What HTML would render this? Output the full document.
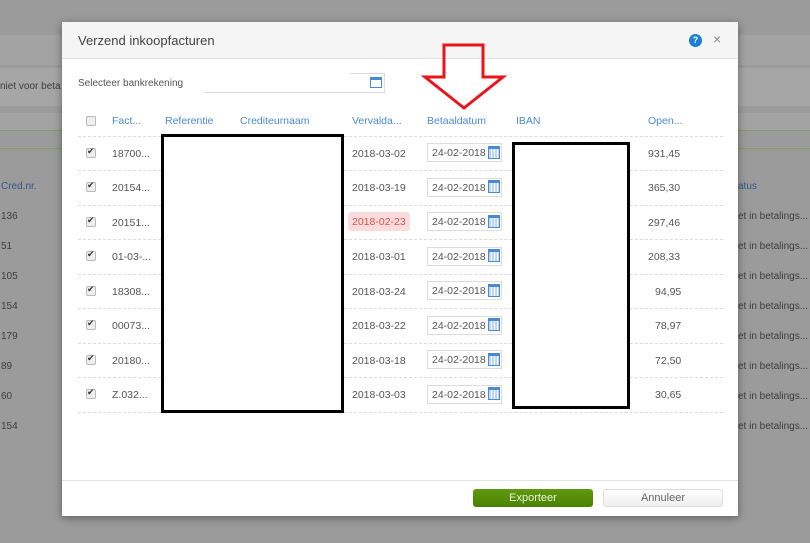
<!DOCTYPE html>
<html><head><meta charset="utf-8"><style>
*{box-sizing:border-box;margin:0;padding:0}
body{width:810px;height:543px;position:relative;overflow:hidden;background:#9b9b9b;font-family:"Liberation Sans",sans-serif;font-size:10.5px;color:#555}
.a{position:absolute;white-space:nowrap}
.bg{color:#3e3e3e;font-size:10px}
.modal{left:62px;top:22px;width:676px;height:494px;background:#fff;box-shadow:0 2px 8px rgba(0,0,0,.4)}
.hd{left:0;top:0;width:676px;height:37px;background:#f5f5f5;border-bottom:1px solid #e3e3e3}
.th{color:#4a8ad0;font-size:10.5px;top:93px}
.row{left:16px;width:645px;height:1px;border-top:1px dashed #dcdcdc}
.cb{width:10px;height:10px;border:1px solid #bbb;background:#eee;border-radius:2px}
.cb.c::after{content:"✔";position:absolute;left:0;top:-3px;font-size:9px;color:#333}
.inp{width:75px;height:19px;border:1px solid #ddd;font-size:10.5px;color:#555;padding:3px 0 0 4px}
.cal{width:12px;height:13px;border:1px solid #4a8ad0;background:repeating-linear-gradient(90deg,#bcd6f2 0 2px,#fff 2px 3px);border-top:3px solid #4a8ad0}
</style></head><body>
<div class="a" style="left:0;top:35px;width:810px;height:30px;background:#a3a3a3"></div>
<div class="a" style="left:0;top:68px;width:810px;height:38px;background:#a6a6a6"></div>
<div class="a bg" style="left:0;top:81px">niet voor beta</div>
<div class="a" style="left:0;top:113px;width:810px;height:18px;background:#a3a3a3"></div>
<div class="a" style="left:0;top:130px;width:810px;height:1px;background:#8a9a6a"></div>
<div class="a" style="left:0;top:148px;width:810px;height:1px;background:#8a9a6a"></div>
<div class="a bg" style="left:1px;top:181px;color:#35558a">Cred.nr.</div>
<div class="a bg" style="left:738px;top:181px;color:#35558a">atus</div>
<div class="a bg" style="left:1px;top:211px">136</div><div class="a bg" style="left:1px;top:241px">51</div><div class="a bg" style="left:1px;top:271px">105</div><div class="a bg" style="left:1px;top:301px">154</div><div class="a bg" style="left:1px;top:331px">179</div><div class="a bg" style="left:1px;top:361px">89</div><div class="a bg" style="left:1px;top:391px">60</div><div class="a bg" style="left:1px;top:421px">154</div>
<div class="a bg" style="left:738px;top:211px">et in betalings...</div><div class="a bg" style="left:738px;top:241px">et in betalings...</div><div class="a bg" style="left:738px;top:271px">et in betalings...</div><div class="a bg" style="left:738px;top:301px">et in betalings...</div><div class="a bg" style="left:738px;top:331px">et in betalings...</div><div class="a bg" style="left:738px;top:361px">et in betalings...</div><div class="a bg" style="left:738px;top:391px">et in betalings...</div><div class="a bg" style="left:738px;top:421px">et in betalings...</div>

<div class="a modal">
<div class="a hd"></div>
<div class="a" style="left:16px;top:11px;font-size:13px;color:#444">Verzend inkoopfacturen</div>
<div class="a" style="left:627px;top:12px;width:13px;height:13px;border-radius:50%;background:#1a7fd6;color:#fff;font-size:9px;font-weight:bold;text-align:center;line-height:13px">?</div>
<div class="a" style="left:651px;top:9px;font-size:14px;color:#888">×</div>
<div class="a" style="left:16px;top:56px;font-size:10px;color:#555">Selecteer bankrekening</div>
<div class="a" style="left:142px;top:51px;width:181px;height:20px;border-bottom:1px solid #ddd;border-right:1px solid #ddd"></div>
<div class="a" style="left:288px;top:51px;width:35px;height:20px;border-top:1px solid #ddd"></div>
<div class="a" style="left:308px;top:55px;width:12px;height:11px;border:1px solid #4a8ad0;border-top:3px solid #4a8ad0"></div>

<div class="a cb" style="left:24px;top:94px"></div>
<div class="a th" style="left:50px">Fact...</div>
<div class="a th" style="left:103px">Referentie</div>
<div class="a th" style="left:178px">Crediteurnaam</div>
<div class="a th" style="left:290px">Vervalda...</div>
<div class="a th" style="left:365px">Betaaldatum</div>
<div class="a th" style="left:454px">IBAN</div>
<div class="a th" style="left:586px">Open...</div>

<div class="a row" style="top:114px"></div>
<div class="a row" style="top:148px"></div>
<div class="a row" style="top:183px"></div>
<div class="a row" style="top:217px"></div>
<div class="a row" style="top:252px"></div>
<div class="a row" style="top:286px"></div>
<div class="a row" style="top:321px"></div>
<div class="a row" style="top:355px"></div>
<div class="a row" style="top:390px"></div>

<div class="a cb c" style="left:24px;top:126px"></div><div class="a" style="left:50px;top:126px">18700...</div><div class="a" style="left:290px;top:126px">2018-03-02</div><div class="a inp" style="left:365px;top:121px">24-02-2018</div><div class="a cal" style="left:426px;top:124px"></div><div class="a" style="left:586px;top:126px">931,45</div>
<div class="a cb c" style="left:24px;top:160px"></div><div class="a" style="left:50px;top:160px">20154...</div><div class="a" style="left:290px;top:160px">2018-03-19</div><div class="a inp" style="left:365px;top:156px">24-02-2018</div><div class="a cal" style="left:426px;top:158px"></div><div class="a" style="left:586px;top:160px">365,30</div>
<div class="a cb c" style="left:24px;top:195px"></div><div class="a" style="left:50px;top:195px">20151...</div><div class="a" style="left:286px;top:190px;width:62px;height:19px;background:#fadcdc;border-radius:3px;color:#d9534f;padding:4px 0 0 4px">2018-02-23</div><div class="a inp" style="left:365px;top:190px">24-02-2018</div><div class="a cal" style="left:426px;top:193px"></div><div class="a" style="left:586px;top:195px">297,46</div>
<div class="a cb c" style="left:24px;top:229px"></div><div class="a" style="left:50px;top:229px">01-03-...</div><div class="a" style="left:290px;top:229px">2018-03-01</div><div class="a inp" style="left:365px;top:225px">24-02-2018</div><div class="a cal" style="left:426px;top:227px"></div><div class="a" style="left:586px;top:229px">208,33</div>
<div class="a cb c" style="left:24px;top:264px"></div><div class="a" style="left:50px;top:264px">18308...</div><div class="a" style="left:290px;top:264px">2018-03-24</div><div class="a inp" style="left:365px;top:259px">24-02-2018</div><div class="a cal" style="left:426px;top:262px"></div><div class="a" style="left:593px;top:264px">94,95</div>
<div class="a cb c" style="left:24px;top:298px"></div><div class="a" style="left:50px;top:298px">00073...</div><div class="a" style="left:290px;top:298px">2018-03-22</div><div class="a inp" style="left:365px;top:294px">24-02-2018</div><div class="a cal" style="left:426px;top:296px"></div><div class="a" style="left:593px;top:298px">78,97</div>
<div class="a cb c" style="left:24px;top:333px"></div><div class="a" style="left:50px;top:333px">20180...</div><div class="a" style="left:290px;top:333px">2018-03-18</div><div class="a inp" style="left:365px;top:328px">24-02-2018</div><div class="a cal" style="left:426px;top:331px"></div><div class="a" style="left:593px;top:333px">72,50</div>
<div class="a cb c" style="left:24px;top:367px"></div><div class="a" style="left:50px;top:367px">Z.032...</div><div class="a" style="left:290px;top:367px">2018-03-03</div><div class="a inp" style="left:365px;top:363px">24-02-2018</div><div class="a cal" style="left:426px;top:365px"></div><div class="a" style="left:593px;top:367px">30,65</div>

<div class="a" style="left:99px;top:112px;width:183px;height:279px;border:3px solid #000;background:#fff"></div>
<div class="a" style="left:450px;top:120px;width:118px;height:267px;border:3px solid #000;background:#fff"></div>

<div class="a" style="left:0;top:458px;width:676px;height:1px;background:#e3e3e3"></div>
<div class="a" style="left:411px;top:467px;width:120px;height:18px;background:linear-gradient(#5f9a10,#4a8200);border-radius:3px;color:#e8f2dc;text-align:center;line-height:18px;font-size:11px">Exporteer</div>
<div class="a" style="left:541px;top:467px;width:120px;height:18px;background:linear-gradient(#fff,#eee);border:1px solid #ddd;border-radius:3px;color:#666;text-align:center;line-height:16px;font-size:11px">Annuleer</div>
</div>

<svg class="a" style="left:0;top:0" width="810" height="543"><polygon points="444,45 483,45 483,77 503,77 464,108 425,77 444,77" fill="none" stroke="#e8161c" stroke-width="3"/></svg>
</body></html>
